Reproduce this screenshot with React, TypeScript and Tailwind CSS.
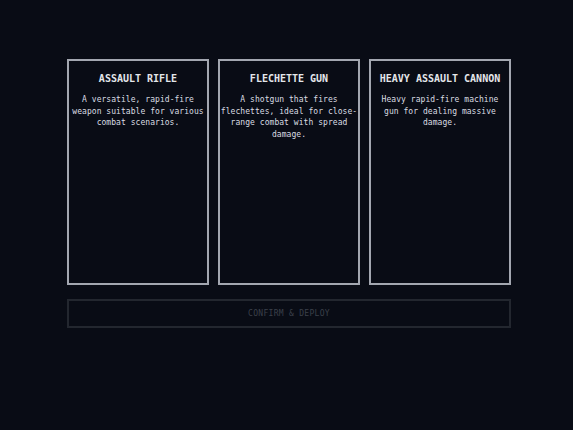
import React from 'react';

interface Weapon {
  name: string;
  lines: string[];
}

// Line breaks follow the original pixel-font wrapping
const WEAPONS: Weapon[] = [
  { name: 'ASSAULT RIFLE', lines: ['A versatile, rapid-fire', 'weapon suitable for various', 'combat scenarios.'] },
  { name: 'FLECHETTE GUN', lines: ['A shotgun that fires', 'flechettes, ideal for close-', 'range combat with spread', 'damage.'] },
  { name: 'HEAVY ASSAULT CANNON', lines: ['Heavy rapid-fire machine', 'gun for dealing massive', 'damage.'] },
];

const WeaponCard: React.FC<{ weapon: Weapon }> = ({ weapon }) => (
  <div className="flex h-[226px] flex-col items-center border-2 border-[#a3a7b0] bg-[#090c15] pt-[12px]">
    <h3 className="text-[10px] font-bold leading-[12px] text-[#e4e6ea]">{weapon.name}</h3>
    <p className="mt-[9px] text-center text-[8px] leading-[11.5px] tracking-[0.05px] whitespace-nowrap text-[#dadde2]">
      {weapon.lines.map((l, i) => (
        <React.Fragment key={i}>
          {i > 0 && <br />}
          {l}
        </React.Fragment>
      ))}
    </p>
  </div>
);

export default function App() {
  return (
    <div
      className="min-h-[430px] w-full bg-[#090c15] pt-[59px]"
      style={{ fontFamily: '"DejaVu Sans Mono", "Liberation Mono", monospace' }}
    >
      <div className="ml-[67px] flex w-[444px] flex-col gap-[14px]">
        <div className="grid grid-cols-3 gap-[9px]">
          {WEAPONS.map((w) => (
            <WeaponCard key={w.name} weapon={w} />
          ))}
        </div>
        <button
          type="button"
          disabled
          className="h-[29px] w-full border-2 border-[#23272f] bg-transparent text-[8px] tracking-[0.3px] text-[#3b404a]"
        >
          CONFIRM &amp; DEPLOY
        </button>
      </div>
    </div>
  );
}
